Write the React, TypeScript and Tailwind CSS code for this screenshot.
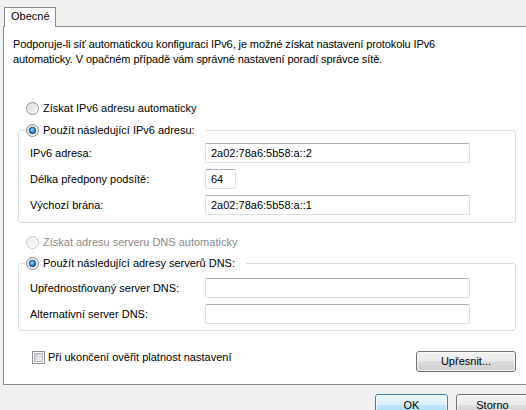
import React from 'react';

type RadioProps = { checked?: boolean; disabled?: boolean };

const Radio: React.FC<RadioProps> = ({ checked, disabled }) => {
  const v = disabled ? 'dis' : 'on';
  return (
    <svg width="13" height="13" viewBox="0 0 13 13" className="shrink-0">
      <defs>
        <linearGradient id={`rb-fill-${v}`} x1="0" y1="0" x2="1" y2="1">
          <stop offset="0" stopColor={disabled ? '#e6e6e6' : '#cdcdcd'} />
          <stop offset="1" stopColor="#ffffff" />
        </linearGradient>
        <radialGradient id="rb-dot" cx="0.45" cy="0.4" r="0.6">
          <stop offset="0" stopColor="#8fd3ff" />
          <stop offset="0.55" stopColor="#3b8ed4" />
          <stop offset="1" stopColor="#1b4f86" />
        </radialGradient>
      </defs>
      <circle cx="6.5" cy="6.5" r="6" fill={`url(#rb-fill-${v})`} stroke={disabled ? '#c8c8c8' : '#8e8f8f'} strokeWidth="1" />
      <circle cx="6.5" cy="6.5" r="4.5" fill="none" stroke="#ffffff" strokeOpacity="0.6" strokeWidth="1" />
      {checked && <circle cx="6.5" cy="6.5" r="3.3" fill="url(#rb-dot)" stroke="#24456b" strokeWidth="0.8" />}
    </svg>
  );
};

const Checkbox: React.FC = () => (
  <div className="w-[13px] h-[13px] shrink-0 border border-[#8e8f8f] bg-white p-px">
    <div className="w-full h-full border border-[#b2b6bb] bg-[linear-gradient(135deg,#cbcfd5_0%,#f6f6f6_100%)]" />
  </div>
);

const TextBox: React.FC<{ value?: string; width: string }> = ({ value, width }) => (
  <div className={`${width} h-[20px] shrink-0 rounded-[2px] border border-[#dbdfe6] border-t-[#abadb3] bg-white pl-[5px] flex items-center`}>
    {value}
  </div>
);

const Row: React.FC<{ label: string; children: React.ReactNode }> = ({ label, children }) => (
  <div className="flex items-center h-[20px]">
    <div className="w-[175px] shrink-0">{label}</div>
    {children}
  </div>
);

const WinButton: React.FC<{ label: string; primary?: boolean; className?: string }> = ({ label, primary, className }) => (
  <div
    className={`${className ?? ''} flex items-center justify-center rounded-[3px] border ${
      primary
        ? 'border-[#3c7fb1] bg-[linear-gradient(#eaf6fd_0%,#d9f0fc_50%,#bee6fd_50%,#a7d9f5_100%)]'
        : 'border-[#707070] bg-[linear-gradient(#f2f2f2_0%,#ebebeb_50%,#dddddd_50%,#cfcfcf_100%)]'
    }`}
  >
    <div className="w-full h-full rounded-[2px] border border-white/70 flex items-center justify-center pb-px">{label}</div>
  </div>
);

const App: React.FC = () => {
  return (
    <div className="w-[526px] h-[410px] overflow-hidden bg-[#f0f0f0] font-['Liberation_Sans',Arial,sans-serif] text-[11px] leading-[15px] text-black">
      {/* tab strip */}
      <div className="flex pl-[4px] pt-[7px]">
        <div className="relative z-10 -mb-px h-[20px] w-[52px] border border-b-0 border-[#898c95] bg-white pl-[6px] pt-[1px]">
          Obecné
        </div>
      </div>

      {/* tab page */}
      <div className="ml-[3px] w-[540px] h-[359px] border border-r-0 border-[#898c95] bg-white">
        <div className="ml-[14px] w-[498px] flex flex-col">
          <p className="-ml-[5px] mt-[10px] tracking-[-0.1px]">
            Podporuje-li síť automatickou konfiguraci IPv6, je možné získat nastavení protokolu IPv6
            <br />
            automaticky. V opačném případě vám správné nastavení poradí správce sítě.
          </p>

          <div className="ml-[8px] mt-[34px] flex items-center gap-[4px] h-[15px]">
            <Radio />
            <span>Získat IPv6 adresu automaticky</span>
          </div>

          <fieldset className="mt-[7px] rounded-[3px] border border-[#d5dfe5] pl-[11px] pt-[5px] pb-[7px]">
            <legend className="-ml-[6px] pl-[2px] pr-[11px]">
              <div className="flex items-center gap-[4px] h-[15px]">
                <Radio checked />
                <span>Použít následující IPv6 adresu:</span>
              </div>
            </legend>
            <div className="flex flex-col gap-[6px]">
              <Row label="IPv6 adresa:">
                <TextBox width="w-[265px]" value="2a02:78a6:5b58:a::2" />
              </Row>
              <Row label="Délka předpony podsítě:">
                <TextBox width="w-[31px]" value="64" />
              </Row>
              <Row label="Výchozí brána:">
                <TextBox width="w-[265px]" value="2a02:78a6:5b58:a::1" />
              </Row>
            </div>
          </fieldset>

          <div className="ml-[8px] mt-[12px] flex items-center gap-[4px] h-[15px] text-[#8a8a8a]">
            <Radio disabled />
            <span>Získat adresu serveru DNS automaticky</span>
          </div>

          <fieldset className="mt-[6px] rounded-[3px] border border-[#d5dfe5] pl-[11px] pt-[7px] pb-[6px]">
            <legend className="-ml-[6px] pl-[2px] pr-[11px]">
              <div className="flex items-center gap-[4px] h-[15px]">
                <Radio checked />
                <span>Použít následující adresy serverů DNS:</span>
              </div>
            </legend>
            <div className="flex flex-col gap-[6px]">
              <Row label="Upřednostňovaný server DNS:">
                <TextBox width="w-[265px]" />
              </Row>
              <Row label="Alternativní server DNS:">
                <TextBox width="w-[265px]" />
              </Row>
            </div>
          </fieldset>

          <div className="mt-[20px] flex items-start justify-between">
            <div className="ml-[14px] flex items-center gap-[3px] h-[13px]">
              <Checkbox />
              <span>Při ukončení ověřit platnost nastavení</span>
            </div>
            <WinButton label="Upřesnit..." className="w-[100px] h-[21px]" />
          </div>
        </div>
      </div>

      {/* dialog buttons */}
      <div className="mt-[9px] pl-[375px] flex gap-[8px]">
        <WinButton label="OK" primary className="w-[73px] h-[23px] shrink-0" />
        <WinButton label="Storno" className="w-[73px] h-[23px] shrink-0" />
      </div>
    </div>
  );
};

export default App;
